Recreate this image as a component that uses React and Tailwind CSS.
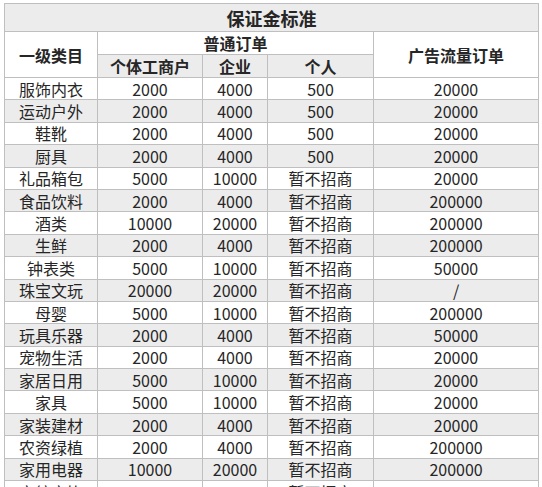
const rows = [
  ['服饰内衣', '2000', '4000', '500', '20000'],
  ['运动户外', '2000', '4000', '500', '20000'],
  ['鞋靴', '2000', '4000', '500', '20000'],
  ['厨具', '2000', '4000', '500', '20000'],
  ['礼品箱包', '5000', '10000', '暂不招商', '20000'],
  ['食品饮料', '2000', '4000', '暂不招商', '200000'],
  ['酒类', '10000', '20000', '暂不招商', '200000'],
  ['生鲜', '2000', '4000', '暂不招商', '200000'],
  ['钟表类', '5000', '10000', '暂不招商', '50000'],
  ['珠宝文玩', '20000', '20000', '暂不招商', '/'],
  ['母婴', '5000', '10000', '暂不招商', '200000'],
  ['玩具乐器', '2000', '4000', '暂不招商', '50000'],
  ['宠物生活', '2000', '4000', '暂不招商', '20000'],
  ['家居日用', '5000', '10000', '暂不招商', '20000'],
  ['家具', '5000', '10000', '暂不招商', '20000'],
  ['家装建材', '2000', '4000', '暂不招商', '20000'],
  ['农资绿植', '2000', '4000', '暂不招商', '200000'],
  ['家用电器', '10000', '20000', '暂不招商', '200000'],
  ['家纺家饰', '2000', '4000', '暂不招商', '20000'],
]

const cell = 'border border-[#bfbfbf] text-center p-0 leading-none'

export default function App() {
  return (
    <div className="w-[542px] h-[487px] overflow-hidden bg-white pt-[3px] pl-[4px] text-[#262626] font-['Noto_Sans_CJK_SC','Noto_Sans',sans-serif]">
      <table className="table-fixed border-collapse w-[534px] text-[16px]">
        <colgroup>
          <col className="w-[93px]" />
          <col className="w-[105px]" />
          <col className="w-[65px]" />
          <col className="w-[106px]" />
          <col className="w-[165px]" />
        </colgroup>
        <thead className="font-bold">
          <tr className="h-[28px] bg-[#ececec]">
            <th colSpan={5} className={`${cell} text-[18px]`}>保证金标准</th>
          </tr>
          <tr className="h-[23px] bg-white">
            <th rowSpan={2} className={cell}>一级类目</th>
            <th colSpan={3} className={cell}>普通订单</th>
            <th rowSpan={2} className={cell}>广告流量订单</th>
          </tr>
          <tr className="h-[23px] bg-[#ececec]">
            <th className={cell}>个体工商户</th>
            <th className={cell}>企业</th>
            <th className={cell}>个人</th>
          </tr>
        </thead>
        <tbody>
          {rows.map((r, i) => (
            <tr key={i} className={`h-[22.4px] ${i % 2 ? 'bg-[#ececec]' : 'bg-white'}`}>
              {r.map((v, j) => (
                <td key={j} className={cell}>{v}</td>
              ))}
            </tr>
          ))}
        </tbody>
      </table>
    </div>
  )
}
